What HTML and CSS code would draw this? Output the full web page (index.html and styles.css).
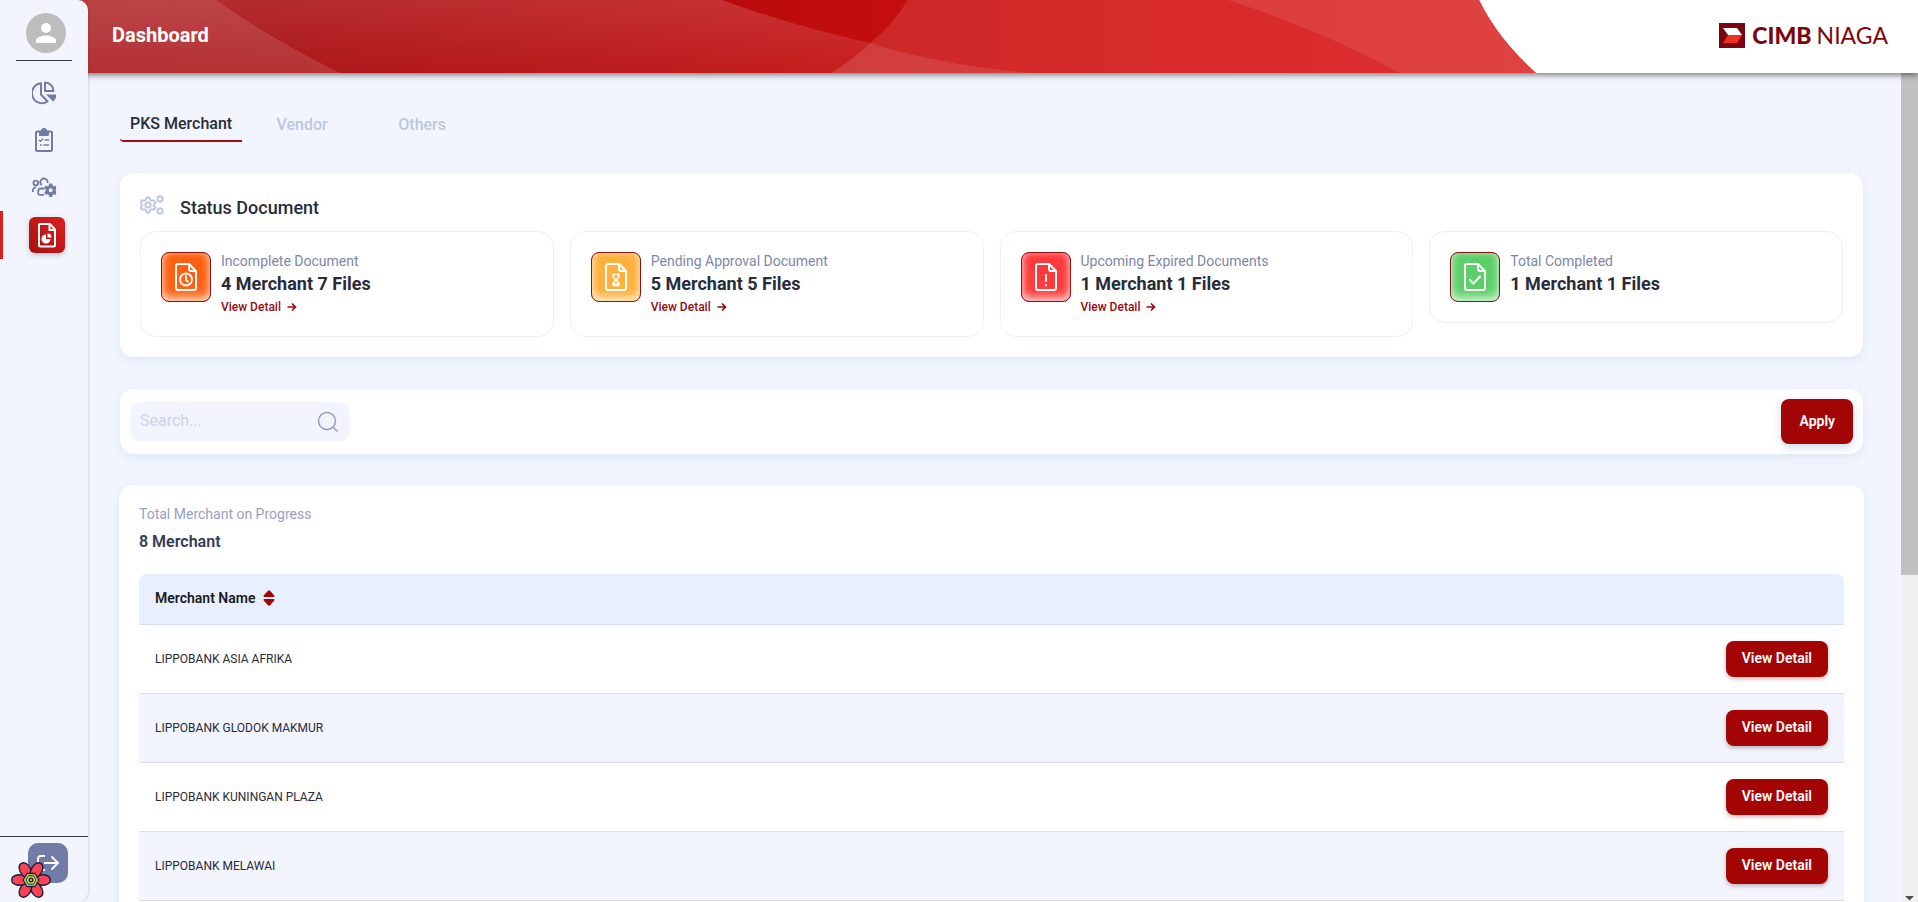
FILE: index.html
```html
<!DOCTYPE html>
<html lang="en">
<head>
<meta charset="utf-8">
<title>Dashboard</title>
<link rel="stylesheet" href="styles.css">
</head>
<body>
<svg class="defs" width="0" height="0" aria-hidden="true">
  <defs>
    <symbol id="doc" viewBox="0 0 28 28"><path d="M6 1h11l7 7v17a2 2 0 0 1-2 2H6a2 2 0 0 1-2-2V3a2 2 0 0 1 2-2zM17 1v5a2 2 0 0 0 2 2h5" fill="none" stroke="currentColor" stroke-width="2" stroke-linejoin="round"/></symbol>
    <symbol id="arrow" viewBox="0 0 10 10"><path d="M.5 5h8M5 1.500 8.500 5 5 8.500" fill="none" stroke="currentColor" stroke-width="1.700"/></symbol>
    <symbol id="cog" viewBox="0 0 24 24"><path d="M10 2h4l.7 3.100 2.300 1.300 3-.9 2 3.500-2.300 2.200v1.600l2.300 2.200-2 3.500-3-.9-2.300 1.300L14 22h-4l-.7-3.100L7 17.600l-3 .9L2 15l2.300-2.200v-1.600L2 9l2-3.500 3 .9 2.300-1.300z" fill="none" stroke="currentColor" stroke-linejoin="round"/><circle cx="12" cy="12" r="3.500" fill="none" stroke="currentColor"/></symbol>
    <symbol id="cog-small" viewBox="0 0 24 24"><path d="M10 3h4l1 3.500 3.500-1 2 3.500-2.500 3 2.500 3-2 3.500-3.500-1L14 21h-4l-1-3.500-3.500 1-2-3.500L6 12 3.500 9l2-3.500 3.500 1z" fill="none" stroke="currentColor" stroke-width="4.500" stroke-linejoin="round"/></symbol>
  </defs>
</svg>
<div class="app">
  <header class="header">
    <svg class="banner" viewBox="0 0 1830 73" preserveAspectRatio="none" aria-hidden="true">
      <defs>
        <linearGradient id="g1" x1="0" x2="1" y1="0" y2="0"><stop offset="0" stop-color="#aa1519"/><stop offset=".12" stop-color="#ac1719"/><stop offset=".6" stop-color="#cb1f1f"/><stop offset="1" stop-color="#d82020"/></linearGradient>
        <linearGradient id="g2" x1="0" x2="0" y1="0" y2="1"><stop offset="0" stop-color="#fff" stop-opacity=".09"/><stop offset="1" stop-color="#fff" stop-opacity="0"/></linearGradient>
        <linearGradient id="g3" x1="0" x2="1" y1="0" y2="0"><stop offset="0" stop-color="#b90b0c"/><stop offset="1" stop-color="#c60e0e"/></linearGradient>
        <linearGradient id="g4" x1="0" x2="1" y1="0" y2="0"><stop offset="0" stop-color="#ca2828"/><stop offset=".45" stop-color="#d82a2a"/><stop offset="1" stop-color="#dd2f2f"/></linearGradient>
      </defs>
      <path fill="#fff" d="M0 0h1830v73H0z"/>
      <path fill="url(#g1)" d="M0 0h1391q19 39 57 73H0z"/>
      <path fill="url(#g2)" d="M0 0h1391q19 39 57 73H0z"/>
      <path fill="#fff" fill-opacity=".12" d="M0 0h128q54 38 124 73H0z"/>
      <path fill="url(#g3)" d="M634 0h186q-14 24-38 43-80-18-148-43z"/>
      <path fill="url(#g4)" d="M820 0h571q19 39 57 73H743q50-30 77-73z"/>
      <path fill="#fff" fill-opacity=".1" d="M782 43q70 22 160 30H743q23-14 39-30z"/>
      <path fill="#fff" fill-opacity=".09" d="M1140 0h251q19 39 57 73h-136q-80-43-172-73z"/>
    </svg>
    <h1 class="title">Dashboard</h1>
    <div class="brand" aria-label="CIMB Niaga">
      <svg width="26" height="25" viewBox="0 0 26 25" aria-hidden="true"><path fill="#7c0610" d="M0 0h26v25H0z"/><path fill="#fff" d="M4 5h14l5 7H9z"/><path fill="#ed3024" d="M9 12h14l-5 8H4z"/></svg>
      <span class="brand-text"><b>CIMB</b><span>NIAGA</span></span>
    </div>
  </header>

  <aside class="sidebar">
    <svg class="avatar" viewBox="0 0 40 40" role="img" aria-label="Profile"><circle cx="20" cy="20" r="20" fill="#bdbdbd"/><circle cx="20" cy="15" r="5" fill="#fff"/><path fill="#fff" d="M10 30v-2.500c0-3.300 6.700-5 10-5s10 1.700 10 5V30z"/></svg>
    <nav class="nav">
      <a href="#" class="nav-item" aria-label="Overview"><svg width="24" height="24" viewBox="0 0 24 24" fill="none" stroke="currentColor" stroke-width="2"><path d="M9 2.200A10 10 0 1 0 15.500 20.500L9 13.500z" stroke-linejoin="round"/><path d="M13 1.500V10h8.500A8.500 8.500 0 0 0 13 1.500z" stroke-linejoin="round"/><path fill="currentColor" stroke="none" d="M14 13.500h10.500c0 3-1.500 5.500-3.500 7z"/></svg></a>
      <a href="#" class="nav-item" aria-label="Tasks"><svg width="24" height="26" viewBox="0 0 24 26" fill="none" stroke="currentColor"><rect x="4" y="4.500" width="16" height="19.500" rx="1.500" stroke-width="2"/><path fill="currentColor" stroke="none" d="M7 9V4h2a3 3 0 0 1 6 0h2v3.500a1.500 1.500 0 0 1-1.500 1.500z"/><path stroke-width="1.500" d="m7 13 1.500 1.300 2.500-2.600M12.500 13H17M8 18h1.800M11.500 18H17"/></svg></a>
      <a href="#" class="nav-item" aria-label="User settings"><svg width="24" height="24" viewBox="0 0 24 24" fill="none" stroke="currentColor" stroke-width="1.800"><circle cx="3.800" cy="8" r="2.300"/><path d="M.9 17v-1.500a3 3 0 0 1 3.500-3M9.800 10A3.600 3.600 0 1 1 15.500 8M12.500 13.500H9.200a3 3 0 0 0-3 3v1.800a1.500 1.500 0 0 0 1.500 1.500H12"/><path fill="currentColor" stroke="none" fill-rule="evenodd" d="M17.300 8.500h2.800l.5 2.100 1.200.7 2-.6 1.400 2.400-1.500 1.500v1.300l1.500 1.500-1.400 2.400-2-.6-1.200.7-.5 2.100h-2.800l-.5-2.100-1.200-.7-2 .6-1.400-2.400 1.500-1.500v-1.300l-1.500-1.500 1.400-2.400 2 .6 1.200-.7zM18.700 13.300a2 2 0 1 0 0 4 2 2 0 0 0 0-4z"/></svg></a>
      <a href="#" class="nav-item active" aria-label="Documents" aria-current="page"><span class="nav-box"><svg width="24" height="26" viewBox="0 0 24 26" fill="none" stroke="#fff" stroke-width="2"><path d="M5 2h10l5 5.500v15.500a1.500 1.500 0 0 1-1.500 1.500h-13A1.500 1.500 0 0 1 4 23V3a1 1 0 0 1 1-1z"/><path d="M14.500 2v6H20"/><path fill="#fff" stroke="none" d="M11 12.500v4.500h4.500A4.500 4.500 0 1 1 11 12.500zM12.500 11.500a4 4 0 0 1 4 4h-4z"/></svg></span></a>
    </nav>
    <div class="side-foot">
      <button class="logout" aria-label="Log out"><svg width="24" height="20" viewBox="0 0 24 20" fill="none" stroke="#fff" stroke-width="2"><path d="M9 3H5a3 3 0 0 0-3 3v3M2 13v1a3 3 0 0 0 3 3h4"/><path d="M8 10h13M15.500 3.500 22 10l-6.500 6.500"/></svg></button>
      <svg class="flower" viewBox="-20 -20 40 40" role="img" aria-label="Query devtools">
        <g fill="#ff4154" stroke="#14213f" stroke-width="1.400"><path id="petal" d="M2-2C6-5 10-5.800 14-5 21-3.500 21 3.500 14 5 10 5.800 6 5 2 2z"/><use href="#petal" transform="rotate(60)"/><use href="#petal" transform="rotate(120)"/><use href="#petal" transform="rotate(180)"/><use href="#petal" transform="rotate(240)"/><use href="#petal" transform="rotate(300)"/></g>
        <path fill="#d8e05a" stroke="#14213f" stroke-width="1.300" d="M-7.800 0-4-6.500h8L7.800 0 4 6.500h-8z"/><path fill="none" stroke="#14213f" stroke-width="1" d="M-5 0-2.700-4.200h5.400L5 0 2.700 4.200h-5.400z"/><circle r="1.800" fill="#d8e05a" stroke="#14213f" stroke-width="1.400"/>
      </svg>
    </div>
  </aside>

  <main class="main">
    <div class="tabs" role="tablist">
      <button class="tab selected" role="tab" aria-selected="true">PKS Merchant</button>
      <button class="tab" role="tab" aria-selected="false">Vendor</button>
      <button class="tab" role="tab" aria-selected="false">Others</button>
    </div>

    <section class="card status">
      <h2 class="status-title"><svg width="25" height="24" viewBox="0 0 25 24" aria-hidden="true"><use href="#cog" x="-1" y="1" width="18" height="18" stroke-width="2.500"/><use href="#cog-small" x="16" y="0" width="8" height="8"/><use href="#cog-small" x="16" y="12" width="8" height="8"/></svg>Status Document</h2>
      <div class="stats">
        <article class="stat">
          <span class="stat-icon orange"><svg width="28" height="28" viewBox="0 0 28 28"><use href="#doc"/><g fill="none" stroke="currentColor" stroke-width="1.800"><circle cx="14" cy="16.500" r="6"/><path d="M14 12.500V17l2.500 2"/></g></svg></span>
          <div><p class="stat-label">Incomplete Document</p><p class="stat-value">4 Merchant 7 Files</p><a class="stat-link" href="#">View Detail <svg width="10" height="10"><use href="#arrow"/></svg></a></div>
        </article>
        <article class="stat">
          <span class="stat-icon amber"><svg width="28" height="28" viewBox="0 0 28 28"><use href="#doc"/><path fill="none" stroke="currentColor" stroke-width="1.600" d="M10 11.500h8M10 22.500h8M11.200 11.500v2.500l5.600 6v2.500M16.800 11.500v2.500l-5.600 6v2.500M12 21h4"/></svg></span>
          <div><p class="stat-label">Pending Approval Document</p><p class="stat-value">5 Merchant 5 Files</p><a class="stat-link" href="#">View Detail <svg width="10" height="10"><use href="#arrow"/></svg></a></div>
        </article>
        <article class="stat">
          <span class="stat-icon red"><svg width="28" height="28" viewBox="0 0 28 28"><use href="#doc"/><path fill="none" stroke="currentColor" stroke-width="1.800" d="M14 11v8M14 21v2.200"/></svg></span>
          <div><p class="stat-label">Upcoming Expired Documents</p><p class="stat-value">1 Merchant 1 Files</p><a class="stat-link" href="#">View Detail <svg width="10" height="10"><use href="#arrow"/></svg></a></div>
        </article>
        <article class="stat">
          <span class="stat-icon green"><svg width="28" height="28" viewBox="0 0 28 28"><use href="#doc"/><path fill="none" stroke="currentColor" stroke-width="2" stroke-linecap="round" d="m9 17 3.500 3.500 6.500-7"/></svg></span>
          <div><p class="stat-label">Total Completed</p><p class="stat-value">1 Merchant 1 Files</p></div>
        </article>
      </div>
    </section>

    <form class="card filter">
      <label class="search"><input type="text" placeholder="Search..." aria-label="Search"><svg width="22" height="22" viewBox="0 0 22 22" fill="none" stroke="#939bc2" stroke-width="1.500" aria-hidden="true"><circle cx="10" cy="10" r="8.500"/><path d="m16 16 4.500 4.500"/></svg></label>
      <button class="btn apply" type="button">Apply</button>
    </form>

    <section class="card list">
      <p class="list-label">Total Merchant on Progress</p>
      <p class="list-total">8 Merchant</p>
      <table class="table">
        <thead><tr><th scope="col"><span class="sort">Merchant Name <svg width="12" height="16" viewBox="0 0 12 16" aria-hidden="true"><path fill="#a30505" d="M5 .8q1-1 2 0l4.300 4.700q.7 1.500-.8 1.500h-9Q0 7 .7 5.500zM5 15.200q1 1 2 0l4.300-4.700Q12 9 10.500 9h-9Q0 9 .7 10.500z"/></svg></span></th><th scope="col" aria-label="Action"></th></tr></thead>
        <tbody>
          <tr><td>LIPPOBANK ASIA AFRIKA</td><td><button class="btn">View Detail</button></td></tr>
          <tr><td>LIPPOBANK GLODOK MAKMUR</td><td><button class="btn">View Detail</button></td></tr>
          <tr><td>LIPPOBANK KUNINGAN PLAZA</td><td><button class="btn">View Detail</button></td></tr>
          <tr><td>LIPPOBANK MELAWAI</td><td><button class="btn">View Detail</button></td></tr>
        </tbody>
      </table>
    </section>
  </main>

  <div class="scrollbar" aria-hidden="true"><div class="thumb"></div><svg width="17" height="6" viewBox="0 0 17 6"><path fill="#505050" d="M4 0h9L8.500 4.500z"/></svg></div>
</div>
</body>
</html>
```

FILE: styles.css
```css
* { box-sizing: border-box; }
body { margin: 0; font-family: Roboto, "Liberation Sans", sans-serif; color: #272c3a; background: #f2f5fd; }
h1, h2, p { margin: 0; }
button, input { font: inherit; border: 0; }
a { text-decoration: none; }
.defs { position: absolute; }

.app {
  display: grid;
  grid-template: 73px minmax(0, 1fr) / 88px minmax(0, 1fr) 17px;
  height: 100vh;
  overflow: hidden;
}

/* Header */
.header {
  grid-area: 1 / 1 / 2 / 4;
  position: relative;
  z-index: 2;
  display: flex;
  align-items: center;
  justify-content: space-between;
  padding: 0 30px 3px 112px;
  background: #b93a3c;
  box-shadow: 0 2px 6px rgba(0, 0, 0, .5);
}
.banner { position: absolute; top: 0; left: 88px; width: calc(100% - 88px); height: 100%; }
.title { position: relative; font-size: 20px; line-height: 24px; font-weight: 700; color: #fff; }
.brand { position: relative; display: flex; align-items: center; gap: 7px; color: #7c0610; }
.brand-text { display: flex; gap: 5px; font-family: Lato, sans-serif; font-size: 23px; line-height: 24px; }
.brand-text b { font-weight: 900; }
.brand-text span { font-weight: 400; }

/* Sidebar */
.sidebar {
  grid-area: 1 / 1 / 3 / 2;
  z-index: 3;
  display: flex;
  flex-direction: column;
  align-items: center;
  padding-top: 13px;
  background: #f2f5fd;
  border-radius: 0 10px 10px 0;
  box-shadow: 1px 0 2px rgba(40, 60, 110, .16);
}
.avatar { width: 40px; height: 40px; margin-left: 4px; }
.nav { display: flex; flex-direction: column; align-items: center; width: 100%; margin-top: 7px; }
.nav::before { content: ""; width: 56px; height: 1px; margin-bottom: 8px; background: #31343f; }
.nav-item { display: flex; align-items: center; justify-content: center; width: 100%; height: 47px; color: #717ba5; }
.nav-item.active { height: 48px; border-left: 3px solid #d8201f; margin-top: 1px; }
.nav-box { display: flex; align-items: center; justify-content: center; width: 36px; height: 36px; margin-left: 3px; border-radius: 6px; background: linear-gradient(45deg, #a80f12, #dc2020); box-shadow: 0 2px 5px rgba(60, 80, 130, .3); }
.side-foot { position: relative; width: 100%; height: 66px; margin-top: auto; padding: 6px 0 0 28px; border-top: 1px solid #31343f; }
.logout { display: flex; align-items: center; justify-content: center; width: 40px; height: 40px; padding: 0; border-radius: 10px; background: #717ba5; }
.flower { position: absolute; left: 11px; bottom: 2px; width: 40px; height: 40px; }

/* Content */
.main { grid-area: 2 / 2 / 3 / 3; padding: 32px 38px 0 32px; overflow: hidden; }
.tabs { display: flex; height: 37px; }
.tab { min-width: 120px; padding: 5px 10px 0; background: none; border-bottom: 2px solid transparent; font-size: 16px; line-height: 20px; font-weight: 500; color: #bcc5e2; }
.tab.selected { padding-top: 3px; color: #272c3a; border-bottom-color: #a30b12; border-bottom-left-radius: 4px; }
.card { background: #fff; border-radius: 14px; box-shadow: 0 3px 10px rgba(180, 200, 235, .32); }

.status { margin-top: 31px; padding: 20px; }
.status-title { display: flex; align-items: flex-start; gap: 15px; height: 38px; font-size: 18px; line-height: 30px; font-weight: 500; }
.status-title svg { color: #bcc5e2; margin-top: 2px; }
.stats { display: grid; grid-template-columns: repeat(4, minmax(0, 1fr)); gap: 16px; align-items: start; }
.stat { display: flex; gap: 10px; padding: 20px; border: 1px solid #ebeff8; border-radius: 16px; }
.stat-icon { display: flex; flex: none; align-items: center; justify-content: center; width: 50px; height: 50px; border: 1px solid #8e1212; border-radius: 8px; color: #fff; box-shadow: inset 0 -4px 10px rgba(255, 255, 255, .7), inset 0 0 6px rgba(255, 255, 255, .3); }
.orange { background: #ff6010; }
.amber { background: #ffb13c; }
.red { background: #ff3a3c; }
.green { background: #5ccf68; }
.stat-label { font-size: 14px; line-height: 18px; color: #7d87a8; }
.stat-value { font-size: 18px; line-height: 28px; font-weight: 700; }
.stat-link { display: flex; align-items: center; gap: 6px; font-size: 12px; line-height: 18px; font-weight: 500; color: #970b13; }

.filter { display: flex; align-items: center; justify-content: space-between; margin-top: 32px; padding: 10px; }
.search { display: flex; align-items: center; width: 220px; height: 39px; padding: 0 11px 0 10px; border-radius: 10px; background: #f2f5fd; }
.search input { flex: 1; min-width: 0; padding: 0 0 2px; background: none; font-size: 16px; line-height: 20px; outline: 0; }
.search input::placeholder { color: #cbd3e8; }
.btn { padding: 0 16px 2px; height: 36px; border-radius: 8px; background: #a30505; color: #fff; font-size: 14px; line-height: 20px; font-weight: 600; box-shadow: 0 2px 4px rgba(60, 20, 40, .3); }
.btn.apply { height: 45px; padding: 0 18px 2px; box-shadow: 0 3px 8px rgba(130, 160, 210, .4); }

.list { margin: 31px -1px 0; padding: 19px 20px 40px; }
.list-label { font-size: 14px; line-height: 20px; color: #98a1c0; }
.list-total { margin-top: 6px; font-size: 16px; line-height: 24px; font-weight: 600; color: #323b57; }
.table { width: 100%; margin-top: 20px; border-spacing: 0; font-size: 12px; line-height: 16px; }
.table th { height: 51px; padding: 0 16px 2px; background: #e8effe; border-bottom: 1px solid #d9dde4; font-size: 14px; font-weight: 600; text-align: left; color: #161b22; }
.table th:first-child { border-top-left-radius: 8px; }
.table th:last-child { border-top-right-radius: 8px; }
.sort { display: flex; align-items: center; gap: 8px; }
.table td { padding: 16px; border-bottom: 1px solid #d9dde4; }
.table td:last-child { text-align: right; }
.table tbody tr:nth-child(even) { background: #f2f5fd; }

.scrollbar { grid-area: 2 / 3 / 3 / 4; display: flex; flex-direction: column; justify-content: space-between; background: #f0f0f0; }
.thumb { height: 60.5%; background: #c1c1c1; }
```
